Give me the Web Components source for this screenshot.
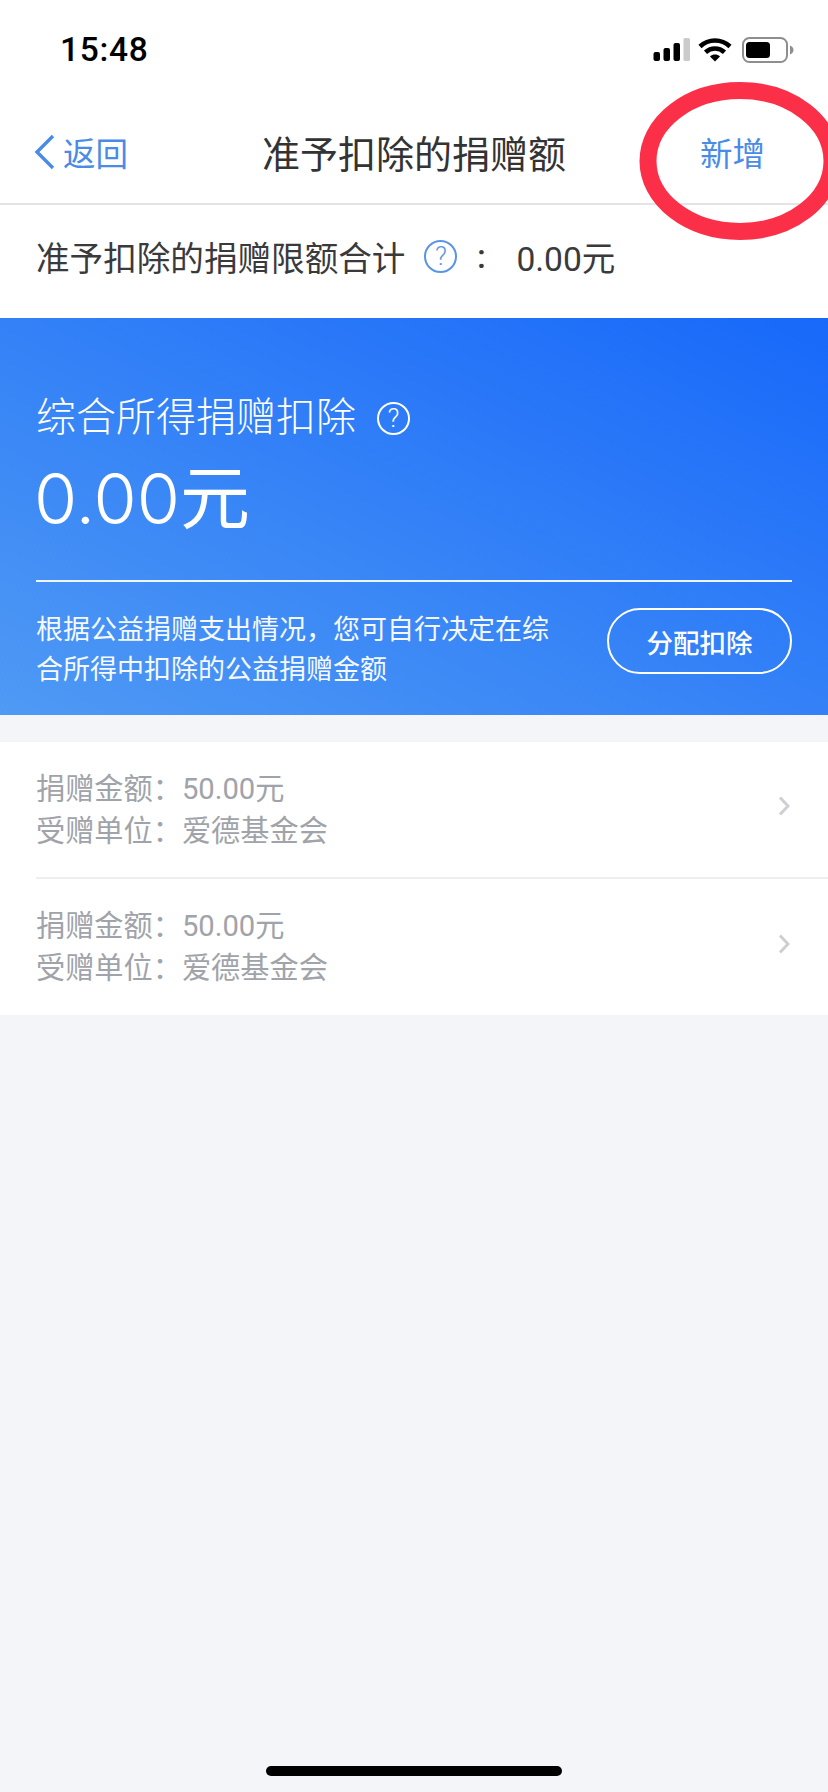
<!DOCTYPE html>
<html lang="zh-CN">
<head>
<meta charset="utf-8">
<title>准予扣除的捐赠额</title>
<style>
  html, body { margin: 0; padding: 0; }
  body {
    width: 828px;
    height: 1792px;
    overflow: hidden;
    background: #f4f5f9;
    font-family: Roboto, "Noto Sans CJK SC", sans-serif;
  }
</style>
</head>
<body>
<app-page>
  <status-bar time="15:48"></status-bar>
  <nav-bar back="返回" action="新增">准予扣除的捐赠额</nav-bar>
  <limit-row value="0.00元">准予扣除的捐赠限额合计</limit-row>
  <deduct-banner label="综合所得捐赠扣除" amount="0.00" unit="元" button="分配扣除">根据公益捐赠支出情况，您可自行决定在综合所得中扣除的公益捐赠金额</deduct-banner>
  <donation-list>
    <donation-row amount="50.00元" org="爱德基金会"></donation-row>
    <donation-row amount="50.00元" org="爱德基金会" last></donation-row>
  </donation-list>
  <home-bar></home-bar>
  <red-mark></red-mark>
</app-page>

<script>
const CJK = 'Roboto, "Noto Sans CJK SC", sans-serif';

class AppPage extends HTMLElement {
  constructor() {
    super();
    this.attachShadow({ mode: "open" });
    this.shadowRoot.innerHTML = `
      <style>
        :host {
          display: flex;
          flex-direction: column;
          position: relative;
          width: 828px;
          height: 1792px;
          overflow: hidden;
          background: #f4f5f9;
        }
      </style>
      <slot></slot>
    `;
  }
}

class StatusBar extends HTMLElement {
  constructor() {
    super();
    this.attachShadow({ mode: "open" });
  }
  connectedCallback() {
    this.shadowRoot.innerHTML = `
      <style>
        :host {
          display: flex;
          align-items: center;
          justify-content: space-between;
          height: 100px;
          box-sizing: border-box;
          padding: 0 34px 0 60px;
          background: #fff;
        }
        .time {
          font: 500 33.5px/1 Roboto, sans-serif;
          color: #000;
          letter-spacing: .7px;
        }
        svg { display: block; }
      </style>
      <span class="time">${this.getAttribute("time")}</span>
      <svg width="142" height="26" viewBox="0 0 142 26">
        <!-- signal -->
        <rect x="1.5" y="15" width="6.5" height="9" rx="2" fill="#000"/>
        <rect x="11.5" y="11" width="6.5" height="13" rx="2" fill="#000"/>
        <rect x="21.5" y="6" width="6.5" height="18" rx="2" fill="#000"/>
        <rect x="31.5" y="1" width="6.5" height="23" rx="1.5" fill="#cbcbcb"/>
        <!-- wifi -->
        <g fill="none" stroke="#000" stroke-width="4.6">
          <path d="M48 9.5C56.5 1.5 69.5 1.5 78 9.5"/>
          <path d="M53.5 15.2C59 10.2 67 10.2 72.5 15.2"/>
        </g>
        <path d="M58 19.4C61 17 65 17 68 19.4L63 24.5Z" fill="#000"/>
        <!-- battery -->
        <rect x="91" y="1" width="44" height="24" rx="6.5" fill="none" stroke="#8e8e8e" stroke-width="2"/>
        <rect x="94" y="5" width="24" height="16" rx="3.5" fill="#000"/>
        <path d="M138 8.5C140 9.2 141.5 11 141.5 13S140 16.8 138 17.5Z" fill="#8e8e8e"/>
      </svg>
    `;
  }
}

class NavBar extends HTMLElement {
  constructor() {
    super();
    this.attachShadow({ mode: "open" });
  }
  connectedCallback() {
    this.shadowRoot.innerHTML = `
      <style>
        :host {
          display: grid;
          grid-template-columns: 1fr auto 1fr;
          align-items: center;
          height: 105px;
          box-sizing: border-box;
          padding: 0 34px;
          background: #fff;
          border-bottom: 2px solid #e4e4e6;
          font-family: ${CJK};
        }
        .back {
          display: flex;
          align-items: center;
          gap: 8px;
          color: #4a8be6;
          font-size: 32.5px;
        }
        .title { color: #333; font-size: 38px; }
        .action { justify-self: end; margin-right: 29px; color: #4a8be6; font-size: 32.5px; }
        svg { display: block; }
      </style>
      <div class="back">
        <svg width="21" height="36" viewBox="0 0 21 36">
          <path d="M19 2L3 18L19 34" fill="none" stroke="#4a8be6" stroke-width="3.4"/>
        </svg>
        <span>${this.getAttribute("back")}</span>
      </div>
      <div class="title"><slot></slot></div>
      <div class="action">${this.getAttribute("action")}</div>
    `;
  }
}

class HelpIcon extends HTMLElement {
  constructor() {
    super();
    this.attachShadow({ mode: "open" });
    this.shadowRoot.innerHTML = `
      <style>
        :host {
          display: inline-flex;
          align-items: center;
          justify-content: center;
          width: 33px;
          height: 33px;
          box-sizing: border-box;
          border: 2px solid currentColor;
          border-radius: 50%;
          font: 300 26px/1 Roboto, sans-serif;
        }
      </style>
      <span>?</span>
    `;
  }
}

class LimitRow extends HTMLElement {
  constructor() {
    super();
    this.attachShadow({ mode: "open" });
  }
  connectedCallback() {
    this.shadowRoot.innerHTML = `
      <style>
        :host {
          display: flex;
          align-items: center;
          height: 113px;
          box-sizing: border-box;
          padding: 0 36px 11px;
          background: #fff;
          color: #3a3a3c;
          font: 33.6px ${CJK};
        }
        help-icon { color: #5a94e6; margin-left: 19px; }
        .colon { width: 48px; margin-right: 11px; text-align: center; font-weight: 500; }
      </style>
      <span><slot></slot></span>
      <help-icon></help-icon>
      <span class="colon">:</span>
      <span>${this.getAttribute("value")}</span>
    `;
  }
}

class DeductBanner extends HTMLElement {
  constructor() {
    super();
    this.attachShadow({ mode: "open" });
  }
  connectedCallback() {
    this.shadowRoot.innerHTML = `
      <style>
        :host {
          display: block;
          height: 397px;
          box-sizing: border-box;
          padding: 75px 36px 0;
          background: linear-gradient(to top right, #4f9af4 0%, #1868fa 100%);
          color: #fff;
          font-family: ${CJK};
        }
        .label { display: flex; align-items: center; gap: 21px; font-size: 40px; line-height: 50px; font-weight: 300; }
        .amount { margin: 12px 0 0 -2px; font-size: 70px; line-height: 88px; }
        .amount b { font: 300 70px/88px Inter, sans-serif; }
        .rule { height: 2px; margin-top: 36px; background: #fff; opacity: .92; }
        .foot { display: flex; align-items: flex-start; justify-content: space-between; margin-top: 26px; }
        .desc { width: 516px; padding-top: 2px; font-size: 27px; line-height: 40px; opacity: .95; }
        .btn {
          display: flex;
          align-items: center;
          justify-content: center;
          width: 185px;
          height: 66px;
          box-sizing: border-box;
          border: 2px solid #fff;
          border-radius: 33px;
          font-size: 26.5px;
          font-weight: 500;
        }
      </style>
      <div class="label"><span>${this.getAttribute("label")}</span><help-icon></help-icon></div>
      <div class="amount"><b>${this.getAttribute("amount")}</b>${this.getAttribute("unit")}</div>
      <div class="rule"></div>
      <div class="foot">
        <div class="desc"><slot></slot></div>
        <div class="btn">${this.getAttribute("button")}</div>
      </div>
    `;
  }
}

class DonationList extends HTMLElement {
  constructor() {
    super();
    this.attachShadow({ mode: "open" });
    this.shadowRoot.innerHTML = `
      <style>
        :host {
          display: block;
          margin-top: 27px;
          padding-left: 36px;
          background: #fff;
        }
      </style>
      <slot></slot>
    `;
  }
}

class DonationRow extends HTMLElement {
  constructor() {
    super();
    this.attachShadow({ mode: "open" });
  }
  connectedCallback() {
    const last = this.hasAttribute("last");
    this.shadowRoot.innerHTML = `
      <style>
        :host {
          display: flex;
          align-items: center;
          justify-content: space-between;
          height: ${last ? 136 : 137}px;
          box-sizing: border-box;
          padding-right: 38px;
          ${last ? "" : "border-bottom: 2px solid #eeeef0;"}
          color: #a0a3a9;
          font: 29.2px/42px ${CJK};
        }
        svg { display: block; margin-bottom: 7px; }
      </style>
      <div>
        <div>捐赠金额：${this.getAttribute("amount")}</div>
        <div>受赠单位：${this.getAttribute("org")}</div>
      </div>
      <svg width="12" height="20" viewBox="0 0 12 20">
        <path d="M2 1.5L10 10L2 18.5" fill="none" stroke="#cfcfd3" stroke-width="3"/>
      </svg>
    `;
  }
}

class HomeBar extends HTMLElement {
  constructor() {
    super();
    this.attachShadow({ mode: "open" });
    this.shadowRoot.innerHTML = `
      <style>
        :host {
          display: block;
          width: 296px;
          height: 10px;
          margin: auto auto 16px;
          border-radius: 5px;
          background: #000;
        }
      </style>
    `;
  }
}

// hand-drawn annotation lying over the nav bar
class RedMark extends HTMLElement {
  constructor() {
    super();
    this.attachShadow({ mode: "open" });
    this.shadowRoot.innerHTML = `
      <style>
        :host { position: absolute; left: 630px; top: 74px; width: 198px; height: 176px; pointer-events: none; }
        svg { display: block; }
      </style>
      <svg width="198" height="176" viewBox="630 74 198 176">
        <ellipse cx="740" cy="161" rx="92" ry="70.5" fill="none" stroke="#fb3048" stroke-width="17"/>
      </svg>
    `;
  }
}

customElements.define("app-page", AppPage);
customElements.define("status-bar", StatusBar);
customElements.define("nav-bar", NavBar);
customElements.define("help-icon", HelpIcon);
customElements.define("limit-row", LimitRow);
customElements.define("deduct-banner", DeductBanner);
customElements.define("donation-list", DonationList);
customElements.define("donation-row", DonationRow);
customElements.define("home-bar", HomeBar);
customElements.define("red-mark", RedMark);
</script>
</body>
</html>
